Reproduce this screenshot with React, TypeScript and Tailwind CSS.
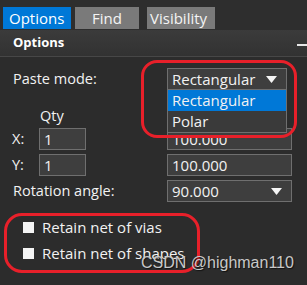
import { ReactNode } from "react";

const font = { fontFamily: '"Open Sans", "Noto Sans", sans-serif' };

function Arrow() {
  return (
    <svg width="11" height="7" viewBox="0 0 11 7" className="shrink-0">
      <path d="M0 0 H11 L5.5 7 Z" fill="#f4f4f4" />
    </svg>
  );
}

function Field({ children, className = "" }: { children: ReactNode; className?: string }) {
  return (
    <div
      className={`h-[22px] border border-[#6f6f6f] bg-[#3e3e3e] flex items-center pl-[4px] pr-[9px] text-[15px] text-[#f2f2f2] ${className}`}
    >
      {children}
    </div>
  );
}

function Check({ label, className = "" }: { label: string; className?: string }) {
  return (
    <div className={`h-[20px] flex items-center pl-[23px] ${className}`}>
      <span className="w-[11px] h-[11px] bg-[#f4f4f4] shrink-0" />
      <span className="ml-[8px] text-[15px] text-[#f2f2f2]">{label}</span>
    </div>
  );
}

export default function App() {
  return (
    <div className="relative w-[307px] h-[285px] overflow-hidden bg-[#2c2c2c] select-none" style={font}>
      {/* Tabs */}
      <div className="h-[30px] pt-[7px] bg-[#2e2e2e] flex items-start text-[15px] leading-[22px]">
        <div className="ml-[3px] w-[68px] h-[22px] bg-[#0078d7] text-white pl-[6px]">Options</div>
        <div className="ml-[4px] w-[64px] h-[22px] bg-[#7a7a7a] text-[#f4f4f4] text-center">Find</div>
        <div className="ml-[8px] w-[68px] h-[22px] bg-[#7a7a7a] text-[#f4f4f4] pl-[3px]">Visibility</div>
      </div>

      {/* Section header */}
      <div className="h-[27px] bg-gradient-to-b from-[#3b3b3b] to-[#323232] border-b border-[#474747] flex items-center justify-between">
        <span className="ml-[13px] text-[13px] font-bold text-white">Options</span>
        <span className="w-[10px] h-[2px] bg-[#e6e6e6] mt-[4px]" />
      </div>

      {/* Body */}
      <div className="text-[14.5px] text-[#f2f2f2]">
        <div className="mt-[11px] h-[22px] flex items-center">
          <span className="ml-[13px] w-[154px]">Paste mode:</span>
          <Field className="w-[120px] justify-between">
            <span>Rectangular</span>
            <Arrow />
          </Field>
        </div>

        <div className="mt-[16px] h-[20px] flex items-center">
          <span className="ml-[40px]">Qty</span>
        </div>

        <div className="mt-[2px] h-[22px] flex items-center">
          <span className="ml-[12px] w-[27px]">X:</span>
          <Field className="w-[47px]">1</Field>
          <Field className="ml-[81px] w-[125px]">100.000</Field>
        </div>

        <div className="mt-[4px] h-[22px] flex items-center">
          <span className="ml-[12px] w-[27px]">Y:</span>
          <Field className="w-[47px]">1</Field>
          <Field className="ml-[81px] w-[125px]">100.000</Field>
        </div>

        <div className="mt-[4px] h-[22px] flex items-center">
          <span className="ml-[13px] w-[154px]">Rotation angle:</span>
          <Field className="w-[125px] justify-between">
            <span>90.000</span>
            <Arrow />
          </Field>
        </div>

        <Check label="Retain net of vias" className="mt-[15px]" />
        <Check label="Retain net of shapes" className="mt-[6px]" />
      </div>

      {/* Open dropdown list */}
      <div className="absolute left-[167px] top-[90px] w-[120px] h-[43px] bg-[#3a3a3a] border border-t-0 border-[#6f6f6f] text-[15px] text-[#f2f2f2]">
        <div className="h-[21px] bg-[#0078d7] pl-[4px] leading-[21px]">Rectangular</div>
        <div className="h-[21px] pl-[4px] leading-[21px]">Polar</div>
      </div>

      {/* Red annotation outlines */}
      <div className="absolute left-[141px] top-[60px] w-[156px] h-[78px] rounded-[16px] border-[3px] border-[#e8202a]" />
      <div className="absolute left-[4px] top-[213px] w-[196px] h-[60px] rounded-[18px] border-[3px] border-[#e8202a]" />

      {/* Watermark */}
      <div
        className="absolute left-[141px] top-[251px] text-[16px] text-[#c8c8c8] [text-shadow:1px_1px_1px_rgba(0,0,0,0.6)]"
        style={{ fontFamily: '"Liberation Sans", Arial, sans-serif' }}
      >
        CSDN @highman110
      </div>
    </div>
  );
}
